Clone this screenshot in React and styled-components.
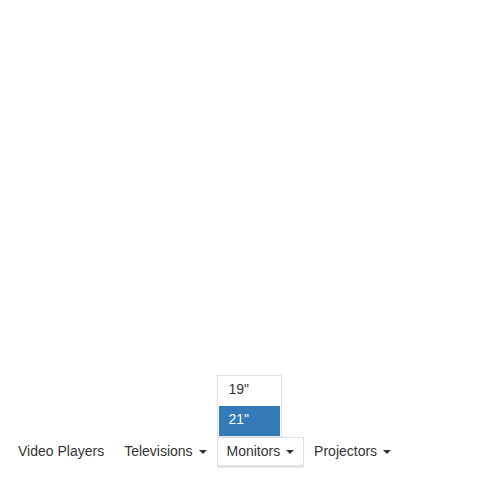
import React from "react";
import styled, { createGlobalStyle } from "styled-components";

const Global = createGlobalStyle`
  html, body { margin: 0; padding: 0; background: #fff; }
  body { font-family: "Liberation Sans", Arial, sans-serif; font-size: 14px; line-height: 20px; color: #333; }
`;

const Page = styled.div`
  min-height: 500px;
  box-sizing: border-box;
  display: flex;
  flex-direction: column;
  justify-content: flex-end;
  padding: 0 8px 34px;
`;

const Nav = styled.ul`
  list-style: none;
  margin: 0;
  padding: 0;
  display: flex;
`;

const Item = styled.li`
  position: relative;
`;

const Link = styled.a`
  display: block;
  padding: 3px 9px 4px;
  border: 1px solid ${(p) => (p.$open ? "#dedede" : "transparent")};
  box-shadow: ${(p) => (p.$open ? "0 2px 0 rgba(0,0,0,0.1)" : "none")};
  color: #333;
  text-decoration: none;
  white-space: nowrap;
  cursor: pointer;
`;

const Caret = styled.span`
  display: inline-block;
  width: 0;
  height: 0;
  margin-left: 2px;
  vertical-align: middle;
  border-top: 4px solid #333;
  border-left: 4px solid transparent;
  border-right: 4px solid transparent;
`;

const Menu = styled.ul`
  position: absolute;
  left: 0;
  bottom: 100%;
  margin: 0;
  padding: 0 1px;
  list-style: none;
  min-width: 61px;
  background: #fff;
  border: 1px solid #e4e4e4;
  box-shadow: 0 0 2px rgba(0, 0, 0, 0.06);
`;

const MenuItem = styled.li`
  display: block;
  height: 20px;
  line-height: 20px;
  padding: 3px 10px 7px;
  color: ${(p) => (p.$active ? "#fff" : "#333")};
  background: ${(p) => (p.$active ? "#337ab7" : "transparent")};
  white-space: nowrap;
`;

const items = [
  { label: "Video Players" },
  { label: "Televisions", caret: true },
  { label: "Monitors", caret: true, open: true, menu: ['19"', '21"'], active: 1 },
  { label: "Projectors", caret: true },
];

export default function App() {
  return (
    <>
      <Global />
      <Page>
        <Nav>
          {items.map((it) => (
            <Item key={it.label}>
              {it.menu && (
                <Menu>
                  {it.menu.map((m, i) => (
                    <MenuItem key={m} $active={i === it.active}>
                      {m}
                    </MenuItem>
                  ))}
                </Menu>
              )}
              <Link $open={it.open}>
                {it.label}
                {it.caret && (
                  <>
                    {" "}
                    <Caret />
                  </>
                )}
              </Link>
            </Item>
          ))}
        </Nav>
      </Page>
    </>
  );
}
